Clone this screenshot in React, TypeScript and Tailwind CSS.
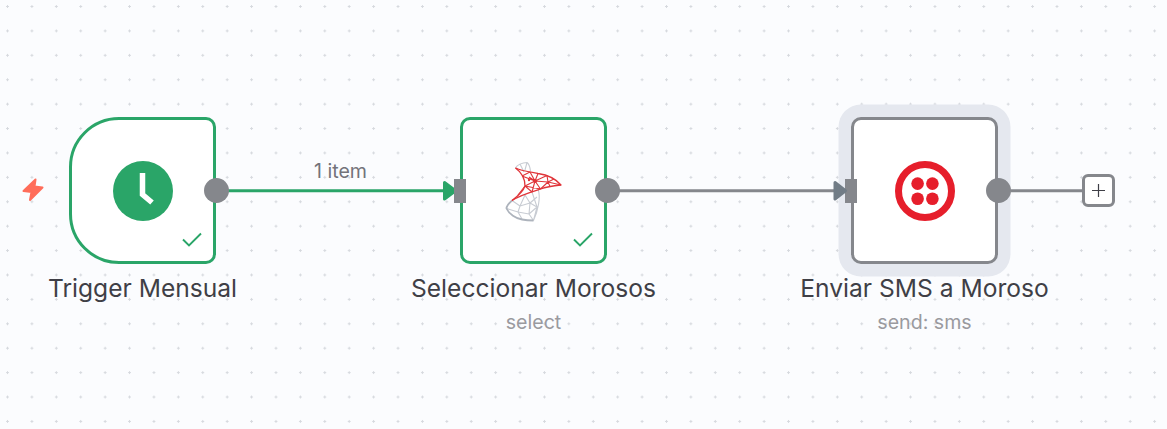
import type { ReactNode } from "react";

const GREEN = "#2aa568";
const GRAY = "#85878c";

function ClockIcon() {
  return (
    <svg width="60" height="60" viewBox="0 0 60 60">
      <circle cx="30" cy="30" r="30" fill={GREEN} />
      <path d="M29.5 12 V33.5 L39 41.5" fill="none" stroke="#fff" strokeWidth="5.5" />
    </svg>
  );
}

function CheckMark() {
  return (
    <svg width="22" height="18" viewBox="0 0 22 18" className="absolute right-[10px] bottom-[12px]">
      <path d="M2 8.5 L8 14.5 L20 2.5" fill="none" stroke={GREEN} strokeWidth="1.9" />
    </svg>
  );
}

function SqlServerIcon() {
  return (
    <svg width="60" height="64" viewBox="0 0 60 64" fill="none" strokeLinejoin="round" className="blur-[0.35px]">
      {/* gray lower sail */}
      <g stroke="#c8ccd3" strokeWidth="1.1">
        <path d="M11.5 9 C13 6 18 3.5 23 3.5 C25 5 26 8 26.5 12 M16 5 L20 13 M23 3.5 L21 11" />
        <path d="M34 30 C37 38 34 52 29.5 61.5 M28 33 L33 48 L29.5 61.5" />
        <path d="M8 41.5 L16 47 L26 44 L33 48 M21 36 L16 47 L14 53 L25 55 L29.5 61.5 M21 36 L26 44 L25 55 M14 53 L18 60 M14 53 L2.5 49.5 M26 44 L33 38 M25 55 L33 48" />
      </g>
      <path d="M8 41.5 C4 45 2.5 47.5 2.5 49.5 C5 55 12 59.5 18 60.5 C22 61.3 26 61.5 29.5 61.5" stroke="#adb3bc" strokeWidth="1.8" />
      {/* red upper sail */}
      <g stroke="#e0353a" strokeWidth="1.1">
        <path d="M11.5 9 C18 12 26 13 34 14.5 C44 16 52 20 57 26 C48 27 42 28 36.5 30 C30 32 16 36 8 41.5" strokeWidth="1.3" />
        <path d="M11.5 9 C17 13 21 20 21 27 C19 33 14 37 8 41.5" strokeWidth="1.3" />
        <path d="M18 17 L26 13 L31 22 L43 16.5 L44 23 L57 26 M18 17 L31 22 L44 23 L36.5 30 L31 22 L21 27 M21 27 L28 33 L31 22 M21 27 L36.5 30 M34 14.5 L31 22 L25 18 M44 23 L50 20 M14 36 L21 27 M44 23 L46 27.5" />
      </g>
      <circle cx="31" cy="22" r="2" fill="#e0353a" />
      <circle cx="25" cy="21" r="1.2" fill="#e0353a" />
    </svg>
  );
}

function TwilioIcon() {
  return (
    <svg width="60" height="60" viewBox="0 0 60 60">
      <circle cx="30" cy="30" r="26.5" fill="none" stroke="#e61e2b" strokeWidth="7" />
      <circle cx="22.6" cy="22.6" r="6.3" fill="#e61e2b" />
      <circle cx="37.4" cy="22.6" r="6.3" fill="#e61e2b" />
      <circle cx="22.6" cy="37.8" r="6.3" fill="#e61e2b" />
      <circle cx="37.4" cy="37.8" r="6.3" fill="#e61e2b" />
    </svg>
  );
}

type FlowNodeProps = {
  position: string;
  card: string;
  title: string;
  sub?: string;
  hasInput?: boolean;
  done?: boolean;
  children: ReactNode;
};

function FlowNode({ position, card, title, sub, hasInput, done, children }: FlowNodeProps) {
  return (
    <div className={`absolute top-[117px] flex w-[147px] flex-col items-center ${position}`}>
      <div className={`relative flex h-[147px] w-[147px] items-center justify-center border-[3px] bg-white ${card}`}>
        {children}
        {done ? <CheckMark /> : null}
        {hasInput ? <div className="absolute left-[-9px] top-[59px] h-[24px] w-[12px] bg-[#85878c]" /> : null}
        <div className="absolute right-[-15.5px] top-[58px] h-[25px] w-[25px] rounded-full bg-[#85878c]" />
      </div>
      <div className="mt-[9px] whitespace-nowrap text-[24.6px] leading-[31px] text-[#3f3f46]">{title}</div>
      {sub ? <div className="mt-[5px] whitespace-nowrap text-[19.6px] leading-[26px] text-[#9a9a9f]">{sub}</div> : null}
    </div>
  );
}

export default function App() {
  return (
    <div className="relative h-[429px] w-[1167px] overflow-hidden bg-[#fbfcfe] bg-[radial-gradient(circle,#d6d9de_1px,transparent_1.1px)] bg-[size:24.42px_24.42px] bg-[position:-4.7px_-5.7px] font-['Inter',sans-serif]">
      {/* connections */}
      <svg width="1167" height="429" className="absolute inset-0">
        <path d="M216 190.7 H446" stroke={GREEN} strokeWidth="3" />
        <path d="M444.5 182.5 L455.5 190.7 L444.5 199 Z" fill={GREEN} stroke={GREEN} strokeWidth="3" strokeLinejoin="round" />
        <path d="M607 190.7 H838" stroke={GRAY} strokeWidth="3" />
        <path d="M998 190.7 H1083" stroke={GRAY} strokeWidth="3" />
      </svg>

      <div className="absolute left-[314px] top-[159px] text-[19.6px] leading-[24px] text-[#73737a]">1 item</div>

      {/* trigger bolt */}
      <svg width="24" height="26" viewBox="0 0 24 26" className="absolute left-[21px] top-[177px]">
        <path d="M14.5 2.5 L2.5 14 L10.5 15 L9 23 L21.5 10.5 L13.5 9.5 Z" fill="#ff6d5a" stroke="#ff6d5a" strokeWidth="2" strokeLinejoin="round" />
      </svg>

      <FlowNode position="left-[69px]" card="rounded-l-[50px] rounded-r-[10px] border-[#2aa568]" title="Trigger Mensual" done>
        <ClockIcon />
      </FlowNode>

      <FlowNode position="left-[460px]" card="rounded-[10px] border-[#2aa568]" title="Seleccionar Morosos" sub="select" hasInput done>
        <SqlServerIcon />
      </FlowNode>

      <FlowNode
        position="left-[851px]"
        card="rounded-[10px] border-[#85878c] shadow-[0_0_0_12.5px_#e5e8ef]"
        title="Enviar SMS a Moroso"
        sub="send: sms"
        hasInput
      >
        <TwilioIcon />
      </FlowNode>

      {/* arrow over the selection halo */}
      <svg width="16" height="22" viewBox="0 0 16 22" className="absolute left-[832px] top-[180px]">
        <path d="M3 2.5 L13.5 10.7 L3 19 Z" fill="#717c86" stroke="#717c86" strokeWidth="3" strokeLinejoin="round" />
      </svg>

      {/* add button */}
      <div className="absolute left-[1082px] top-[174px] flex h-[33px] w-[33px] items-center justify-center rounded-[6px] border-[3px] border-[#85878c] bg-white">
        <svg width="15" height="15" viewBox="0 0 15 15">
          <path d="M7.5 1 V14 M1 7.5 H14" stroke="#3f3f46" strokeWidth="1.2" />
        </svg>
      </div>
    </div>
  );
}
